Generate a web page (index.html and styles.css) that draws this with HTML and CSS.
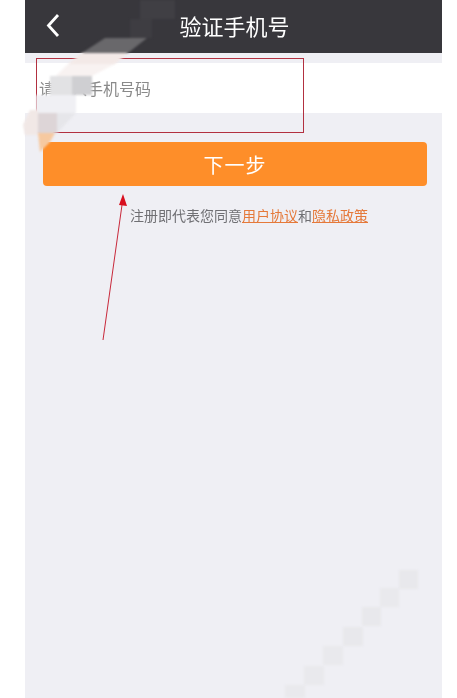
FILE: index.html
```html
<!DOCTYPE html>
<html lang="zh-CN">
<head>
    <meta charset="UTF-8">
    <meta name="viewport" content="width=device-width, initial-scale=1.0">
    <title>验证手机号</title>
    <link rel="stylesheet" href="styles.css">
</head>
<body>
    <div class="phone">
        <header class="topbar">
            <svg class="back" width="14" height="24" viewBox="0 0 14 24">
                <path d="M12 2 L2.5 12.5 L12 23" fill="none" stroke="#fff" stroke-width="2.8"/>
            </svg>
            <h1>验证手机号</h1>
        </header>
        <div class="field">请输入手机号码</div>
        <button class="next">下一步</button>
        <p class="terms">注册即代表您同意<a href="#">用户协议</a>和<a href="#">隐私政策</a></p>
    </div>

    <!-- red annotations, then the mosaic watermark that lies over them -->
    <svg class="overlay" width="457" height="698" viewBox="0 0 457 698">
        <rect x="36.5" y="58.5" width="267" height="74" fill="none" stroke="#b23040" stroke-width="1"/>
        <path d="M103 340 L122 205" fill="none" stroke="#c8283a" stroke-width="1"/>
        <polygon points="123,194 127,206 119,205" fill="#d8101f"/>
        <g class="mosaic">
            <rect x="140" y="0" width="35" height="19" fill="#403f44"/>
            <rect x="130" y="19" width="22" height="19" fill="#3e3d42"/>
            <polygon points="105,38 147,38 128,53 82,53" fill="#69686b"/>
            <polygon points="82,53 128,53 115,64 68,64" fill="#f3e9e7"/>
            <polygon points="68,64 115,64 92,76 56,76" fill="#f8f2f1"/>
            <rect x="50" y="76" width="22" height="19" fill="#e2e2e4"/>
            <rect x="72" y="76" width="20" height="19" fill="#cfcfd2"/>
            <rect x="36" y="95" width="40" height="18" fill="#f0f0f4"/>
            <polygon points="57,113 76,113 57,133" fill="#e6e6ea"/>
            <rect x="38" y="113" width="19" height="20" fill="#ddd5d7"/>
            <polygon points="30,110 38,110 38,135 25,135 23,125" fill="#f1e8e6"/>
            <polygon points="38,133 55,133 50,142 40,152" fill="#f6c9a0"/>
        </g>
        <g class="mosaic">
            <rect x="399" y="570" width="19" height="19" fill="#e8e8ec"/>
            <rect x="380" y="588" width="19" height="19" fill="#e9e9ed"/>
            <rect x="362" y="607" width="19" height="19" fill="#e8e8ec"/>
            <rect x="343" y="627" width="20" height="19" fill="#e8e8ec"/>
            <rect x="323" y="646" width="20" height="19" fill="#e9e9ed"/>
            <rect x="304" y="666" width="20" height="19" fill="#e9e9ed"/>
            <rect x="285" y="685" width="20" height="13" fill="#e9e9ed"/>
        </g>
    </svg>
</body>
</html>
```

FILE: styles.css
```css
html, body {
    margin: 0;
    height: 100%;
    background-color: #fff;
    overflow: hidden;
}

body {
    position: relative;
    font-family: "Noto Sans CJK SC", "Liberation Sans", sans-serif;
}

.phone {
    width: 417px;
    height: 698px;
    margin-left: 25px;
    background-color: #efeff4;
    display: flex;
    flex-direction: column;
    filter: blur(0.35px);
}

.topbar {
    height: 53px;
    background-color: #38373c;
    display: flex;
    align-items: center;
    justify-content: center;
    position: relative;
}

.topbar h1 {
    margin: 0 0 3px 2px;
    font-size: 22px;
    font-weight: 400;
    color: #fff;
    line-height: 1;
}

.back {
    position: absolute;
    left: 21px;
    top: 13px;
}

.field {
    margin-top: 10px;
    height: 50px;
    line-height: 50px;
    background-color: #fff;
    padding-left: 14px;
    font-size: 16px;
    color: #8a8a8a;
}

.next {
    margin: 29px 15px 0 18px;
    height: 44px;
    border: none;
    border-radius: 4px;
    background-color: #fe8e29;
    color: #fff;
    font-family: inherit;
    font-size: 20px;
    letter-spacing: 1px;
    padding: 0;
}

.terms {
    margin: 19px 0 0;
    padding-left: 105px;
    font-size: 14px;
    line-height: 20px;
    color: #6f6f73;
}

.terms a {
    color: #e5793a;
}

.overlay {
    position: absolute;
    left: 0;
    top: 0;
}

.mosaic {
    filter: blur(0.8px);
}
```
